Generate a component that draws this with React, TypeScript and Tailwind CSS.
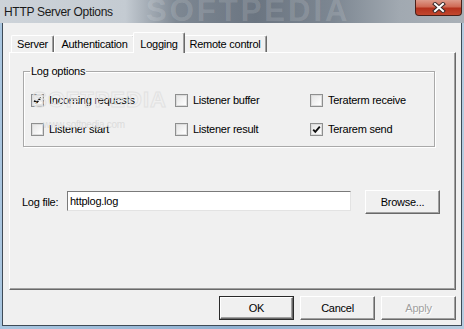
import React from "react";

const font = { fontFamily: '"Liberation Sans", Arial, sans-serif' };

function Check({ checked }: { checked?: boolean }) {
  return (
    <div className="w-[13px] h-[13px] border border-[#8e8f8f] bg-white shrink-0 flex">
      <div className="flex-1 border border-[#dcdcdc] bg-gradient-to-br from-[#e6e6e6] to-white relative">
        {checked && (
          <svg width="11" height="11" viewBox="0 0 11 11" className="absolute -left-[1px] -top-[1px]">
            <path d="M2.2 5.6 L4.3 7.8 L8.8 2.6" fill="none" stroke="#111" strokeWidth="1.9" />
          </svg>
        )}
      </div>
    </div>
  );
}

function Option({ label, checked }: { label: string; checked?: boolean }) {
  return (
    <div className="flex items-center gap-[5px] h-[13px]">
      <Check checked={checked} />
      <span className="leading-[13px]">{label}</span>
    </div>
  );
}

function Btn({ label, kind }: { label: string; kind?: "default" | "disabled" }) {
  if (kind === "default") {
    return (
      <div className="w-[75px] h-[24px] border border-[#2a2a2a] flex">
        <div className="flex-1 flex items-center justify-center bg-[#f0f0f0] border-t border-l border-white border-r border-b border-r-[#696969] border-b-[#696969] shadow-[inset_-1px_-1px_0_#a0a0a0]">
          {label}
        </div>
      </div>
    );
  }
  return (
    <div
      className={
        "w-[75px] h-[24px] flex items-center justify-center bg-[#f0f0f0] border-t border-l border-white border-r border-b border-r-[#696969] border-b-[#696969] shadow-[inset_-1px_-1px_0_#a0a0a0] " +
        (kind === "disabled" ? "text-[#a0a0a0] [text-shadow:1px_1px_0_#ffffff]" : "")
      }
    >
      {label}
    </div>
  );
}

function Tab({ label, active, w }: { label: string; active?: boolean; w: string }) {
  if (active) {
    return (
      <div
        className={
          w +
          " h-[21px] -mb-[1px] -mx-[2px] relative z-10 bg-[#f0f0f0] border-t border-l border-white border-r border-r-[#696969] rounded-t-[2px] flex items-start justify-center pt-[3px] shadow-[inset_-1px_0_0_#a0a0a0]"
        }
      >
        {label}
      </div>
    );
  }
  return (
    <div
      className={
        w +
        " h-[17px] bg-[#f0f0f0] border-t border-l border-white border-r border-r-[#696969] rounded-t-[2px] flex items-center justify-center pt-[1px] shadow-[inset_-1px_0_0_#a0a0a0]"
      }
    >
      {label}
    </div>
  );
}

export default function App() {
  return (
    <div
      className="w-[464px] h-[329px] overflow-hidden flex flex-col bg-gradient-to-r from-[#a9c6e0] via-[#8fb0d0] to-[#b6cce0] text-[11px] tracking-[-0.25px] text-black relative"
      style={font}
    >
      {/* title bar */}
      <div className="h-[23px] shrink-0 flex items-start justify-between relative overflow-hidden bg-[linear-gradient(to_right,#cdd3d9_0%,#c4cbd2_27%,#7d8792_38%,#6b7581_55%,#7d8792_72%,#a1a9b1_86%,#a9b0b7_100%)]">
        <div className="absolute left-[146px] -top-[6px] text-[31px] font-bold tracking-[3px] text-white/15 leading-[34px] pointer-events-none">
          SOFTPEDIA
        </div>
        <div className="pl-[4px] pt-[3px] text-[12px] tracking-[-0.3px] text-[#1a1a1a] relative">HTTP Server Options</div>
        <div className="w-[47px] h-[16px] mr-[2px] rounded-b-[4px] border border-t-0 border-[#4a2019] bg-[linear-gradient(to_bottom,#dd9a8a_0%,#cf6a55_45%,#b4321d_55%,#c2482f_100%)] flex items-center justify-center relative">
          <svg width="14" height="11" viewBox="0 0 14 11">
            <path d="M3 2 L11 9 M11 2 L3 9" stroke="#3a2a2a" strokeWidth="4" strokeLinecap="square" />
            <path d="M3 2 L11 9 M11 2 L3 9" stroke="#ffffff" strokeWidth="2" strokeLinecap="square" />
          </svg>
        </div>
      </div>

      {/* client area */}
      <div className="ml-[2px] w-[460px] h-[303px] border-x border-b border-[#3f4b57] bg-[#f0f0f0] pl-[6px] pr-[5px] pt-[9px] flex flex-col relative">
        {/* tabs */}
        <div className="h-[20px] flex items-end pl-[2px]">
          <Tab label="Server" w="w-[43px]" />
          <Tab label="Authentication" w="w-[81px]" />
          <Tab label="Logging" w="w-[52px]" active />
          <Tab label="Remote control" w="w-[84px]" />
        </div>

        {/* panel */}
        <div className="h-[238px] border-t border-l border-white border-r border-b border-r-[#696969] border-b-[#696969] shadow-[inset_-1px_-1px_0_#a0a0a0] flex flex-col">
          <fieldset className="ml-[13px] mt-[12px] w-[412px] h-[82px] border border-[#a9a9a9] shadow-[inset_1px_1px_0_#ffffff,1px_1px_0_#ffffff] px-[7px] pt-[16px]">
            <legend className="-ml-[1px] px-[1px] leading-[13px]">Log options</legend>
            <div className="grid grid-cols-[144px_135px_1fr] gap-y-[16px]">
              <Option label="Incoming requests" checked />
              <Option label="Listener buffer" />
              <Option label="Teraterm receive" />
              <Option label="Listener start" />
              <Option label="Listener result" />
              <Option label="Terarem send" checked />
            </div>
          </fieldset>

          <div className="mt-[44px] ml-[12px] flex items-center h-[22px]">
            <span className="w-[45px]">Log file:</span>
            <div className="w-[284px] h-[20px] mb-[2px] bg-white border-t border-l border-[#7a7a7a] border-r border-b border-r-[#e3e3e3] border-b-[#e3e3e3] flex items-center pl-[2px]">
              httplog.log
            </div>
            <div className="ml-[14px]">
              <Btn label="Browse..." />
            </div>
          </div>
        </div>

        {/* buttons */}
        <div className="mt-[6px] flex justify-end gap-[6px]">
          <Btn label="OK" kind="default" />
          <Btn label="Cancel" />
          <Btn label="Apply" kind="disabled" />
        </div>

        {/* faint watermark */}
        <div className="absolute left-[29px] top-[60px] text-[22px] font-bold tracking-[1px] text-transparent [-webkit-text-stroke:1px_#e2e2e2] pointer-events-none">
          SOFTPEDIA
        </div>
        <div className="absolute left-[40px] top-[94px] text-[10px] text-[#dcdcdc] pointer-events-none">
          www.softpedia.com
        </div>
      </div>
    </div>
  );
}
